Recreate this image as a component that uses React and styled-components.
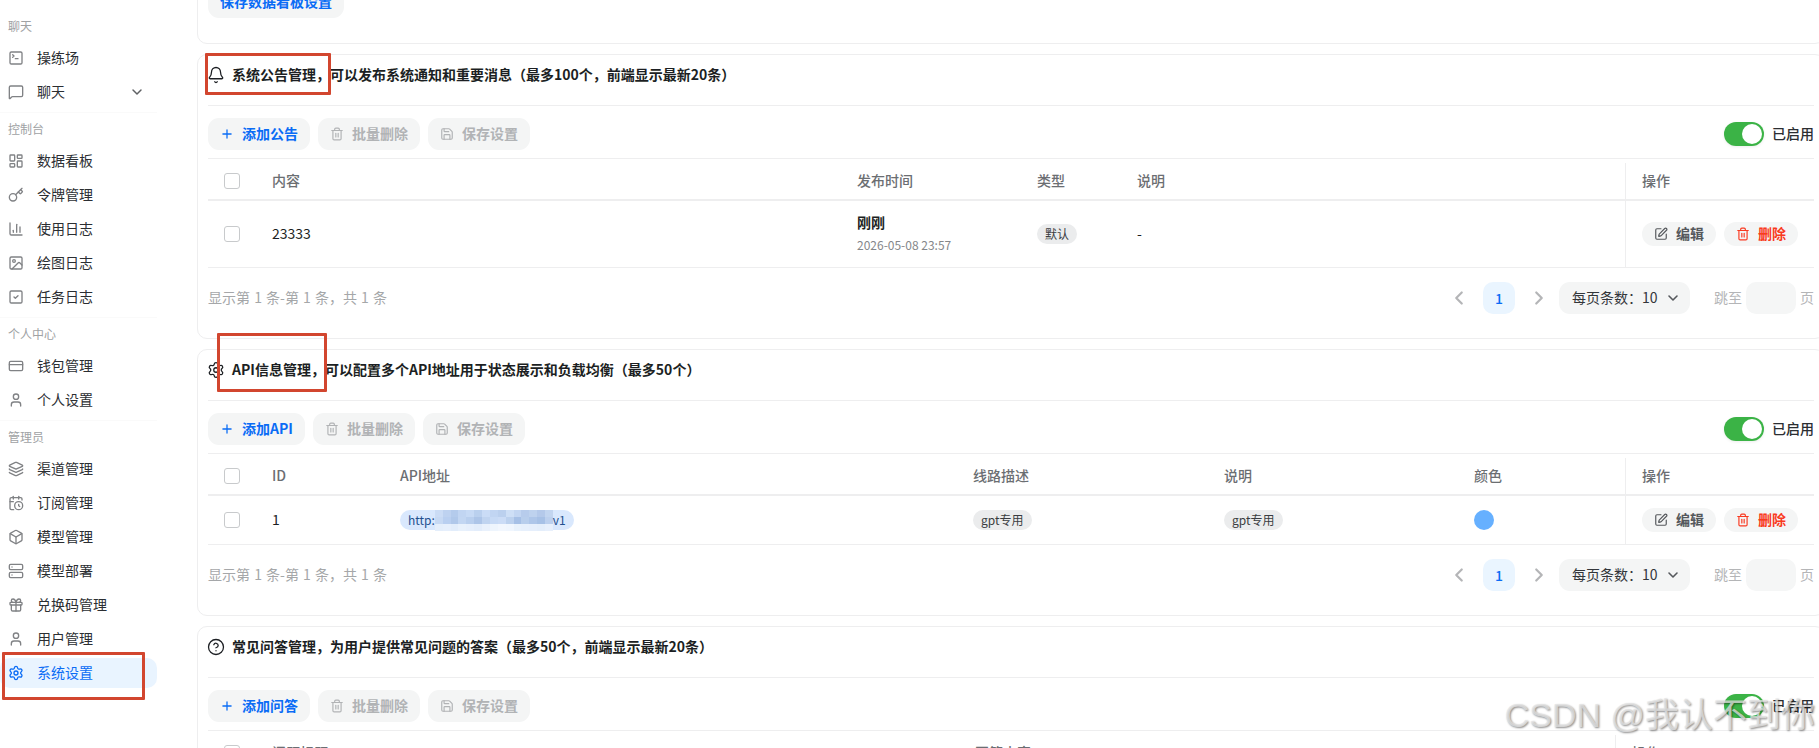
import React from "react";
import styled, { createGlobalStyle } from "styled-components";
import {
  Bell,
  Box,
  CalendarClock,
  ChartColumn,
  ChevronDown,
  ChevronLeft,
  ChevronRight,
  CircleHelp,
  CreditCard,
  Gift,
  Image,
  Key,
  Layers,
  LayoutDashboard,
  MessageSquare,
  Plus,
  Save,
  Server,
  Settings,
  SquareCheck,
  SquarePen,
  SquareTerminal,
  Trash2,
  User,
} from "lucide-react";

const GlobalStyle = createGlobalStyle`
  html, body {
    margin: 0;
    height: 100%;
    overflow: hidden;
    background: #fff;
  }
  body {
    font-family: "Noto Sans CJK SC", "Liberation Sans", sans-serif;
    font-size: 14px;
    color: #1c1f23;
  }
  * { box-sizing: border-box; }
`;

const Page = styled.div`
  position: relative;
  display: flex;
  width: 100vw;
  height: 100vh;
  overflow: hidden;
`;

const Sidebar = styled.nav`
  flex: 0 0 197px;
  padding-top: 10px;
`;

const NavSection = styled.div`
  width: 157px;
  padding-bottom: 1px;
  & + & {
    border-top: 1px solid #fafafa;
  }
`;

const NavLabel = styled.div`
  height: 33px;
  line-height: 32px;
  padding-left: 8px;
  font-size: 12px;
  color: #a0a2a4;
`;

const NavItem = styled.div`
  display: flex;
  align-items: center;
  gap: 13px;
  height: 30px;
  margin-bottom: 4px;
  padding: 0 12px 0 8px;
  border-radius: 10px;
  background: ${(p) => (p.$active ? "#e9f4ff" : "transparent")};
  color: ${(p) => (p.$active ? "#0a6cf5" : "#2b2e32")};
  svg {
    flex: none;
    color: ${(p) => (p.$active ? "#0a6cf5" : "#808285")};
  }
`;

// the CJK face sits a pixel low, so text gets lifted inside its flex row
const Lifted = styled.span`
  display: block;
  padding-bottom: 2px;
`;

const NavChevron = styled(ChevronDown)`
  margin-left: auto;
  color: #5f6164 !important;
`;

const Main = styled.main`
  flex: 1;
  min-width: 0;
`;

const Card = styled.section`
  width: 1628px;
  margin-bottom: 10px;
  padding: 0 10px;
  background: #fff;
  border: 1px solid #eeeeef;
  border-radius: 10px;
`;

const ClippedCard = styled(Card)`
  height: 74px;
  margin-top: -30px;
  padding-top: 15px;
`;

const CardTitle = styled.h2`
  display: flex;
  align-items: center;
  gap: 7px;
  height: 51px;
  margin: 0;
  padding: 10px 0 20px;
  font-size: 14px;
  line-height: 20px;
  font-weight: 700;
  color: #1c1f23;
  border-bottom: 1px solid #eeeeef;
  svg {
    flex: none;
    margin-left: -1px;
  }
`;

const Toolbar = styled.div`
  display: flex;
  align-items: center;
  justify-content: space-between;
  height: 53px;
  padding: 12px 0 8px;
  border-bottom: 1px solid #eeeeef;
`;

const ButtonGroup = styled.div`
  display: flex;
  gap: 8px;
`;

const toneColors = {
  primary: "#0a6cf5",
  muted: "#b1b3b5",
  plain: "#55585c",
  danger: "#f93920",
};

const ActionButton = styled.button`
  display: inline-flex;
  align-items: center;
  gap: 8px;
  height: ${(p) => (p.$small ? "24px" : "32px")};
  padding: 0 12px;
  border: 0;
  border-radius: ${(p) => (p.$small ? "12px" : "11px")};
  background: #f4f5f5;
  color: ${(p) => toneColors[p.$tone]};
  font: inherit;
  font-weight: 700;
  white-space: nowrap;
`;

const Toggle = styled.div`
  display: flex;
  align-items: center;
  gap: 8px;
  font-weight: 500;
  color: #2b2e32;
`;

const ToggleTrack = styled.span`
  display: flex;
  justify-content: flex-end;
  width: 40px;
  height: 24px;
  padding: 2px;
  border-radius: 12px;
  background: #3bb346;
  box-shadow: 0 1px 3px rgba(0, 0, 0, 0.08);
`;

const ToggleKnob = styled.span`
  width: 20px;
  height: 20px;
  border-radius: 50%;
  background: #fff;
`;

const HeadRow = styled.div`
  display: grid;
  grid-template-columns: ${(p) => p.$cols};
  height: 42px;
  padding-top: 4px;
  border-bottom: 2px solid #eeeeef;
  color: #6b6e72;
  font-weight: 500;
`;

const BodyRow = styled.div`
  display: grid;
  grid-template-columns: ${(p) => p.$cols};
  height: ${(p) => p.$height}px;
  border-bottom: 1px solid #eeeeef;
`;

const Cell = styled.div`
  display: flex;
  flex-direction: column;
  justify-content: center;
  align-items: flex-start;
  min-width: 0;
  padding-left: 16px;
`;

const TextCell = styled(Cell)`
  padding-bottom: 2px;
`;

const OpHeadCell = styled(TextCell)`
  border-left: 1px solid #eeeeef;
`;

const OpCell = styled(Cell)`
  flex-direction: row;
  justify-content: flex-start;
  align-items: center;
  gap: 8px;
  border-left: 1px solid #eeeeef;
`;

const Checkbox = styled.span`
  display: block;
  width: 16px;
  height: 16px;
  border: 1.5px solid #c8cacc;
  border-radius: 3px;
  background: #fff;
`;

const TimeMain = styled.div`
  font-weight: 700;
  line-height: 20px;
`;

const TimeSub = styled.div`
  margin-top: 3px;
  font-size: 12px;
  line-height: 20px;
  color: #85878a;
`;

const Tag = styled.span`
  display: inline-block;
  height: 20px;
  padding: 0 8px;
  border-radius: 10px;
  background: #ebeced;
  font-size: 12px;
  line-height: 20px;
  color: #3a3d41;
`;

const UrlTag = styled.span`
  display: inline-flex;
  align-items: center;
  height: 20px;
  padding: 0 8px;
  border-radius: 10px;
  background: #d9e8fd;
  font-size: 12px;
  line-height: 20px;
  color: #23508f;
`;

const Mosaic = styled.span`
  display: grid;
  grid-template-columns: repeat(15, 1fr);
  grid-auto-rows: 7px;
  width: 118px;
  height: 21px;
`;

const MosaicCell = styled.span`
  background: ${(p) => p.$tone};
`;

const ColorDot = styled.span`
  display: block;
  width: 20px;
  height: 20px;
  border-radius: 50%;
  background: ${(p) => p.$color};
`;

const Pager = styled.div`
  display: flex;
  align-items: center;
  justify-content: space-between;
  height: 70px;
  padding: 14px 0 24px;
`;

const PagerInfo = styled(Lifted)`
  color: #a5a7a9;
  word-spacing: 1px;
`;

const PagerControls = styled.div`
  display: flex;
  align-items: center;
`;

const PagerArrow = styled.span`
  display: flex;
  align-items: center;
  justify-content: center;
  width: 32px;
  height: 32px;
  margin-right: ${(p) => p.$gap}px;
  color: #b4b5b7;
`;

const PageNumber = styled.span`
  display: flex;
  align-items: center;
  justify-content: center;
  width: 32px;
  height: 32px;
  margin-right: 8px;
  border-radius: 10px;
  background: #eaf5ff;
  color: #0a6cf5;
  font-weight: 500;
`;

const SizeSelect = styled.div`
  display: flex;
  align-items: center;
  width: 131px;
  height: 32px;
  padding: 0 9px 0 13px;
  border-radius: 11px;
  background: #f4f5f5;
  color: #33363a;
  white-space: nowrap;
  svg {
    margin-left: auto;
    color: #55585c;
  }
`;

const JumpLabel = styled(Lifted)`
  color: #b4b5b7;
  margin-left: ${(p) => p.$left}px;
`;

const JumpInput = styled.span`
  display: block;
  width: 50px;
  height: 32px;
  margin-left: 4px;
  border-radius: 10px;
  background: #f5f6f6;
`;

const Annotation = styled.div`
  position: absolute;
  left: ${(p) => p.$x}px;
  top: ${(p) => p.$y}px;
  width: ${(p) => p.$w}px;
  height: ${(p) => p.$h}px;
  border: 3px solid #d2462f;
  border-radius: 1px;
  pointer-events: none;
`;

const Watermark = styled.div`
  position: absolute;
  right: 4px;
  top: 692px;
  font-family: "Liberation Sans", "Noto Sans CJK SC", sans-serif;
  font-size: 34px;
  line-height: 46px;
  white-space: nowrap;
  color: rgba(228, 228, 228, 0.75);
  text-shadow: 1px 1px 2px rgba(0, 0, 0, 0.45);
`;

const navSections = [
  {
    label: "聊天",
    items: [
      { text: "操练场", Icon: SquareTerminal },
      { text: "聊天", Icon: MessageSquare, chevron: true },
    ],
  },
  {
    label: "控制台",
    items: [
      { text: "数据看板", Icon: LayoutDashboard },
      { text: "令牌管理", Icon: Key },
      { text: "使用日志", Icon: ChartColumn },
      { text: "绘图日志", Icon: Image },
      { text: "任务日志", Icon: SquareCheck },
    ],
  },
  {
    label: "个人中心",
    items: [
      { text: "钱包管理", Icon: CreditCard },
      { text: "个人设置", Icon: User },
    ],
  },
  {
    label: "管理员",
    items: [
      { text: "渠道管理", Icon: Layers },
      { text: "订阅管理", Icon: CalendarClock },
      { text: "模型管理", Icon: Box },
      { text: "模型部署", Icon: Server },
      { text: "兑换码管理", Icon: Gift },
      { text: "用户管理", Icon: User },
      { text: "系统设置", Icon: Settings, active: true },
    ],
  },
];

const mosaicTones = [
  "#cbdcf5", "#bed2f0", "#b4cbec", "#c1d5f2", "#c7daf5", "#bad0ee", "#cadcf6", "#c1d5f2",
  "#bbd0ee", "#cedff6", "#c3d6f2", "#b7ccec", "#bed2ee", "#b4c9ea", "#c2d5f0",
  "#c7d9f3", "#b9cff0", "#b0c8ea", "#c2d6f2", "#b9cfee", "#adc5e8", "#c0d4f0", "#c7daf5",
  "#cbdcf6", "#bcd1ee", "#a6c0e6", "#b8ceec", "#aec6e9", "#a7c1e6", "#bcd0ee",
  "#e4eefb", "#e6effc", "#e2edfb", "#e8f1fc", "#e6effc", "#e3edfb", "#e9f1fc", "#eef5fd",
  "#f2f7fe", "#f0f6fe", "#e9f2fc", "#e7f0fc", "#e6effc", "#e4eefb", "#e8f0fc",
];

const Sidebarnav = () => (
  <Sidebar>
    {navSections.map((section) => (
      <NavSection key={section.label}>
        <NavLabel>{section.label}</NavLabel>
        {section.items.map(({ text, Icon, chevron, active }) => (
          <NavItem key={text} $active={active}>
            <Icon size={16} strokeWidth={2} />
            <Lifted>{text}</Lifted>
            {chevron && <NavChevron size={16} strokeWidth={2.2} />}
          </NavItem>
        ))}
      </NavSection>
    ))}
  </Sidebar>
);

const CardToolbar = ({ addLabel }) => (
  <Toolbar>
    <ButtonGroup>
      <ActionButton $tone="primary">
        <Plus size={14} strokeWidth={2.2} />
        <Lifted>{addLabel}</Lifted>
      </ActionButton>
      <ActionButton $tone="muted">
        <Trash2 size={14} />
        <Lifted>批量删除</Lifted>
      </ActionButton>
      <ActionButton $tone="muted">
        <Save size={14} />
        <Lifted>保存设置</Lifted>
      </ActionButton>
    </ButtonGroup>
    <Toggle>
      <ToggleTrack>
        <ToggleKnob />
      </ToggleTrack>
      <Lifted>已启用</Lifted>
    </Toggle>
  </Toolbar>
);

const TableHead = ({ cols, labels }) => (
  <HeadRow $cols={cols}>
    <Cell>
      <Checkbox />
    </Cell>
    {labels.map((label) => (
      <TextCell key={label}>{label}</TextCell>
    ))}
    <OpHeadCell>操作</OpHeadCell>
  </HeadRow>
);

const RowActions = () => (
  <OpCell>
    <ActionButton $small $tone="plain">
      <SquarePen size={14} />
      <Lifted>编辑</Lifted>
    </ActionButton>
    <ActionButton $small $tone="danger">
      <Trash2 size={14} />
      <Lifted>删除</Lifted>
    </ActionButton>
  </OpCell>
);

const Pagination = () => (
  <Pager>
    <PagerInfo>显示第 1 条-第 1 条，共 1 条</PagerInfo>
    <PagerControls>
      <PagerArrow $gap={8}>
        <ChevronLeft size={22} strokeWidth={2.4} />
      </PagerArrow>
      <PageNumber>1</PageNumber>
      <PagerArrow $gap={4}>
        <ChevronRight size={22} strokeWidth={2.4} />
      </PagerArrow>
      <SizeSelect>
        <Lifted>每页条数：10</Lifted>
        <ChevronDown size={16} strokeWidth={2.4} />
      </SizeSelect>
      <JumpLabel $left={24}>跳至</JumpLabel>
      <JumpInput />
      <JumpLabel $left={4}>页</JumpLabel>
    </PagerControls>
  </Pager>
);

const noticeCols = "48px 585px 180px 100px 504px 189px";
const apiCols = "48px 128px 573px 251px 250px 167px 189px";
const faqCols = "48px 703px 656px 199px";

export default function App() {
  return (
    <Page>
      <GlobalStyle />
      <Sidebarnav />
      <Main>
        <ClippedCard>
          <ActionButton $tone="primary">
            <Lifted>保存数据看板设置</Lifted>
          </ActionButton>
        </ClippedCard>

        <Card>
          <CardTitle>
            <Bell size={18} strokeWidth={1.7} />
            <Lifted>系统公告管理，可以发布系统通知和重要消息（最多100个，前端显示最新20条）</Lifted>
          </CardTitle>
          <CardToolbar addLabel="添加公告" />
          <TableHead cols={noticeCols} labels={["内容", "发布时间", "类型", "说明"]} />
          <BodyRow $cols={noticeCols} $height={67}>
            <Cell>
              <Checkbox />
            </Cell>
            <TextCell>23333</TextCell>
            <TextCell>
              <TimeMain>刚刚</TimeMain>
              <TimeSub>2026-05-08 23:57</TimeSub>
            </TextCell>
            <Cell>
              <Tag>默认</Tag>
            </Cell>
            <TextCell>-</TextCell>
            <RowActions />
          </BodyRow>
          <Pagination />
        </Card>

        <Card>
          <CardTitle>
            <Settings size={18} strokeWidth={1.7} />
            <Lifted>API信息管理，可以配置多个API地址用于状态展示和负载均衡（最多50个）</Lifted>
          </CardTitle>
          <CardToolbar addLabel="添加API" />
          <TableHead cols={apiCols} labels={["ID", "API地址", "线路描述", "说明", "颜色"]} />
          <BodyRow $cols={apiCols} $height={49}>
            <Cell>
              <Checkbox />
            </Cell>
            <TextCell>1</TextCell>
            <Cell>
              <UrlTag>
                http:
                <Mosaic>
                  {mosaicTones.map((tone, i) => (
                    <MosaicCell key={i} $tone={tone} />
                  ))}
                </Mosaic>
                v1
              </UrlTag>
            </Cell>
            <Cell>
              <Tag>gpt专用</Tag>
            </Cell>
            <Cell>
              <Tag>gpt专用</Tag>
            </Cell>
            <Cell>
              <ColorDot $color="#66b0ff" />
            </Cell>
            <RowActions />
          </BodyRow>
          <Pagination />
        </Card>

        <Card>
          <CardTitle>
            <CircleHelp size={18} strokeWidth={1.7} />
            <Lifted>常见问答管理，为用户提供常见问题的答案（最多50个，前端显示最新20条）</Lifted>
          </CardTitle>
          <CardToolbar addLabel="添加问答" />
          <TableHead cols={faqCols} labels={["问题标题", "回答内容"]} />
        </Card>
      </Main>

      <Annotation $x={205} $y={53} $w={126} $h={42} />
      <Annotation $x={217} $y={333} $w={110} $h={59} />
      <Annotation $x={2} $y={652} $w={143} $h={48} />
      <Watermark>CSDN @我认不到你</Watermark>
    </Page>
  );
}
